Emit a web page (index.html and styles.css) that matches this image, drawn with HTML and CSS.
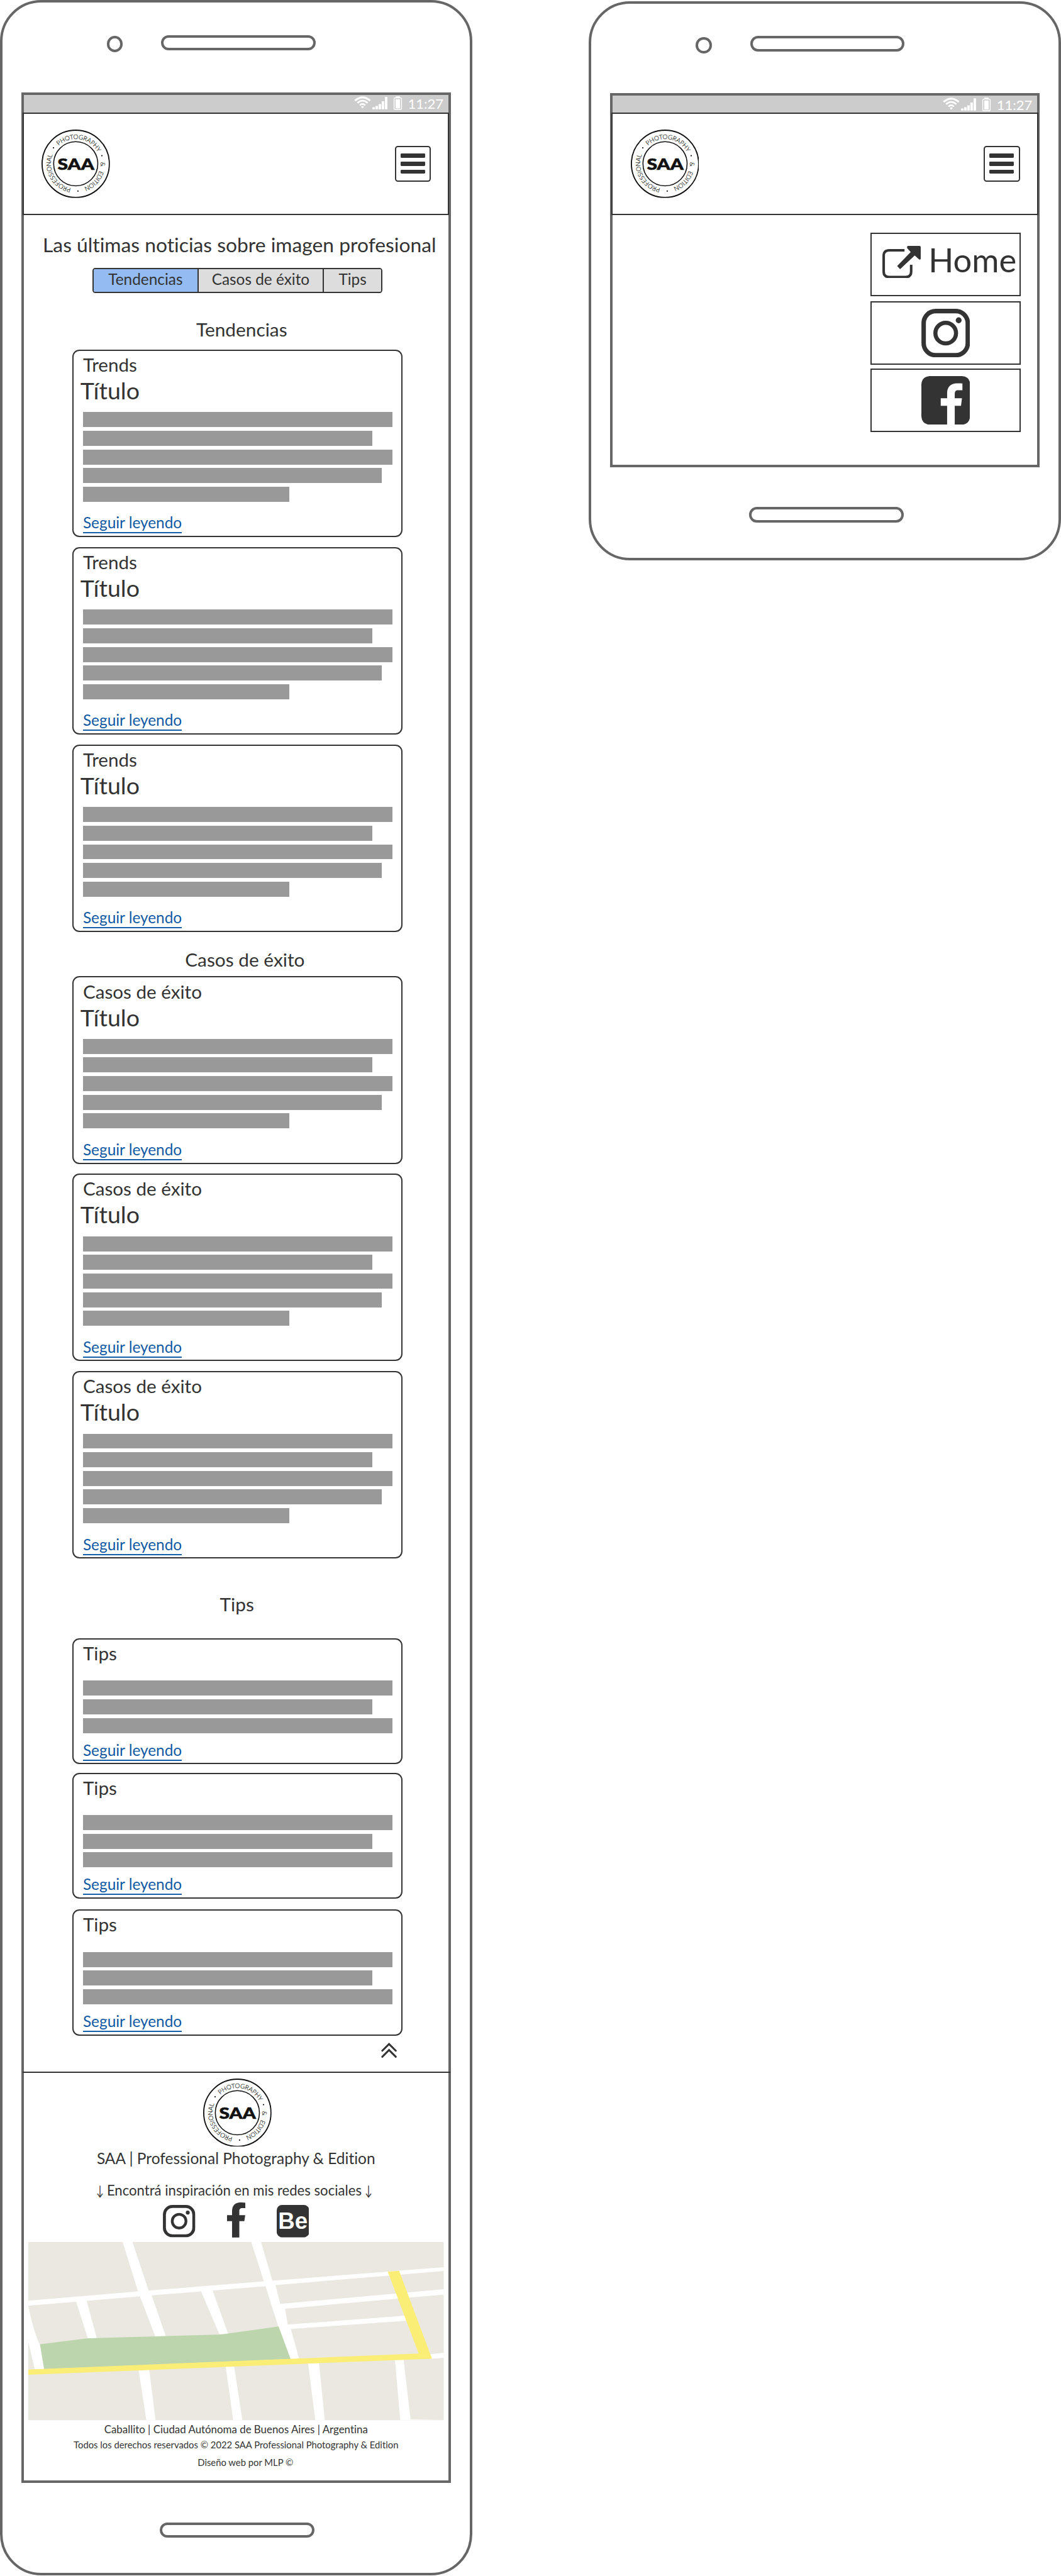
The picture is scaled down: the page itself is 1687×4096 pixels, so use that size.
FILE: index.html
```html
<!DOCTYPE html>
<html lang="es">
<head>
<meta charset="utf-8">
<title>SAA | Noticias</title>
<link rel="stylesheet" href="styles.css">
</head>
<body>
<svg class="defs" width="0" height="0" aria-hidden="true">
  <defs>
    <path id="ring" d="M58 100A42 42 0 0 1 58 16A42 42 0 0 1 58 100"/>
    <symbol id="logo" viewBox="0 0 116 116">
      <circle cx="58" cy="58" r="57" fill="#fff" stroke="#111" stroke-width="2"/>
      <circle cx="58" cy="58" r="37.4" fill="none" stroke="#111" stroke-width="1.7"/>
      <g class="ring-text">
        <text><textPath href="#ring" startOffset="8" textLength="73.3">PROFESSIONAL</textPath></text>
        <text><textPath href="#ring" startOffset="100.1" textLength="77.3">PHOTOGRAPHY</textPath></text>
        <text><textPath href="#ring" startOffset="194.8">&amp;</textPath></text>
        <text><textPath href="#ring" startOffset="209.6" textLength="39.6">EDITION</textPath></text>
      </g>
      <g fill="#111"><circle cx="20.3" cy="31" r="1.2"/><circle cx="102.3" cy="44.3" r="1.2"/><circle cx="61.7" cy="104.3" r="1.2"/></g>
      <text class="logo-name" x="27.2" y="67.9" textLength="62" lengthAdjust="spacingAndGlyphs">SAA</text>
    </symbol>
    <symbol id="instagram" viewBox="0 0 83 83">
      <rect x="3.9" y="3.9" width="75.2" height="75.2" rx="20.5" fill="none" stroke="#333" stroke-width="7.6"/>
      <circle cx="41.5" cy="41.5" r="17.6" fill="none" stroke="#333" stroke-width="7"/>
      <circle cx="63.6" cy="19.6" r="5" fill="#333"/>
    </symbol>
    <symbol id="status-icons" viewBox="0 0 82 24">
      <g fill="none" stroke="#fff" stroke-width="3.4">
        <path d="M1.4 7.6Q14.3 -3.6 27.2 7.6"/>
        <path d="M5.6 11.6Q14.3 3.6 23 11.6" stroke-width="2.8"/>
        <path d="M9.6 15.4Q14.3 11 19 15.4" stroke-width="2.6"/>
      </g>
      <path fill="#fff" d="M11.6 17.8Q14.3 15.6 17 17.8L14.3 20.6ZM31 18.6h4.2v3.4H31zM36.3 16.6h4.2V22h-4.2zM41.5 13.4h4.2V22h-4.2zM46.8 8.4H51V22h-4.2zM52.2 1.2h4.2V22h-4.2z"/>
      <rect x="67.8" y="2.8" width="12.6" height="19.6" rx="1.6" fill="none" stroke="#fff" stroke-width="1.5"/>
      <path fill="#fff" d="M70.5 .2h7.2v2.6h-7.2zM70.3 5h7.6v15.4h-7.6z"/>
    </symbol>
  </defs>
</svg>

<main class="board">
  <section class="phone phone-main">
    <div class="phone-top"><span class="camera"></span><span class="pill speaker"></span></div>
    <div class="screen">
      <div class="status"><svg class="status-icons"><use href="#status-icons"/></svg><span>11:27</span></div>
      <header class="header">
        <svg class="logo"><use href="#logo"/></svg>
        <button class="burger" aria-label="Menú"><i></i><i></i><i></i></button>
      </header>
      <h1 class="page-title">Las últimas noticias sobre imagen profesional</h1>
      <nav class="tabs"><a class="tab active">Tendencias</a><a class="tab">Casos de éxito</a><a class="tab">Tips</a></nav>

      <h2 class="section-title trends-title">Tendencias</h2>
      <div class="cards">
        <article class="card"><h3>Trends</h3><h4>Título</h4><div class="lines"><i></i><i class="w2"></i><i></i><i class="w4"></i><i class="w5"></i></div><a class="more">Seguir leyendo</a></article>
        <article class="card"><h3>Trends</h3><h4>Título</h4><div class="lines"><i></i><i class="w2"></i><i></i><i class="w4"></i><i class="w5"></i></div><a class="more">Seguir leyendo</a></article>
        <article class="card"><h3>Trends</h3><h4>Título</h4><div class="lines"><i></i><i class="w2"></i><i></i><i class="w4"></i><i class="w5"></i></div><a class="more">Seguir leyendo</a></article>
      </div>

      <h2 class="section-title cases-title">Casos de éxito</h2>
      <div class="cards">
        <article class="card"><h3>Casos de éxito</h3><h4>Título</h4><div class="lines"><i></i><i class="w2"></i><i></i><i class="w4"></i><i class="w5"></i></div><a class="more">Seguir leyendo</a></article>
        <article class="card"><h3>Casos de éxito</h3><h4>Título</h4><div class="lines"><i></i><i class="w2"></i><i></i><i class="w4"></i><i class="w5"></i></div><a class="more">Seguir leyendo</a></article>
        <article class="card"><h3>Casos de éxito</h3><h4>Título</h4><div class="lines"><i></i><i class="w2"></i><i></i><i class="w4"></i><i class="w5"></i></div><a class="more">Seguir leyendo</a></article>
      </div>

      <h2 class="section-title tips-title">Tips</h2>
      <div class="cards tips">
        <article class="card tip"><h3>Tips</h3><div class="lines"><i></i><i class="w2"></i><i></i></div><a class="more">Seguir leyendo</a></article>
        <article class="card tip"><h3>Tips</h3><div class="lines"><i></i><i class="w2"></i><i></i></div><a class="more">Seguir leyendo</a></article>
        <article class="card tip"><h3>Tips</h3><div class="lines"><i></i><i class="w2"></i><i></i></div><a class="more">Seguir leyendo</a></article>
      </div>

      <div class="to-top">
        <svg viewBox="0 0 27 26" fill="none" stroke="#333" stroke-width="3.2" stroke-linecap="round" stroke-linejoin="miter"><path d="M2 13.6L13.4 2.3L24.8 13.6M2 23.8L13.4 12.5L24.8 23.8"/></svg>
      </div>

      <footer class="footer">
        <svg class="logo"><use href="#logo"/></svg>
        <p class="brand">SAA | Professional Photography &amp; Edition</p>
        <p class="follow"><span class="arrow">↓</span><span>Encontrá inspiración en mis redes sociales</span><span class="arrow">↓</span></p>
        <div class="social">
          <svg class="ig"><use href="#instagram"/></svg>
          <svg class="fb" viewBox="0 0 31.2 59.4"><path fill="#333" d="M8.5 59.4V31.7H0V21.7H8.5V15C8.5 5 14 0 22.5 0C26 0 29 .2 31.2 .6V9.7H26C22 9.7 20.8 11.4 20.8 15V21.7H30.8L29.3 31.7H20.8V59.4Z"/></svg>
          <svg class="be" viewBox="0 0 55 55"><rect width="55" height="55" rx="9" fill="#333"/><text x="2.4" y="41" textLength="50" lengthAdjust="spacingAndGlyphs">Be</text></svg>
        </div>
        <svg class="map" viewBox="38 60 1492 906" preserveAspectRatio="none">
          <path fill="#ebe8e1" d="M38 60H1530V966H38Z"/>
          <g fill="#fff">
            <path d="M38 358L432 311L884 260L1530 188V207L925 279L890 285L481 331L38 384Z"/>
            <path d="M377 60H412L470 306L481 331L532 540H494L438 333L432 311Z"/>
            <path d="M839 60H874L915 258L926 279L943 375L960 399L970 480L981 502L1011 655H980L936 490L890 285L884 260Z"/>
            <path d="M208 355L246 350L284 550H252Z"/>
            <path d="M657 306L699 302L756 528H724Z"/>
            <path d="M940 375L1530 300V327L960 399H944Z"/>
            <path d="M968 480L1400 433V460L981 502Z"/>
            <path d="M38 384Q57 520 80 582L95 706H61L38 567Z"/>
            <path d="M434 708L472 706L495 966H462Z"/>
            <path d="M747 692L777 690L807 966H774Z"/>
            <path d="M1043 676L1082 674L1103 966H1069Z"/>
            <path d="M1355 660L1386 658L1411 962L1530 965V966H1374Z"/>
            <path d="M1480 631L1530 623V648L1484 654Z"/>
          </g>
          <path fill="#bcd5ac" d="M80 580L252 549L730 530L937 489L980 655L95 706Z"/>
          <path fill="#faee77" d="M38 708L1440 627L1329 210L1370 206L1488 653L38 735Z"/>
        </svg>
        <p class="place">Caballito | Ciudad Autónoma de Buenos Aires | Argentina</p>
        <p class="legal">Todos los derechos reservados © 2022 SAA Professional Photography &amp; Edition</p>
        <p class="legal credit">Diseño web por MLP ©</p>
      </footer>
    </div>
    <span class="pill home-key"></span>
  </section>

  <section class="phone phone-menu">
    <div class="phone-top"><span class="camera"></span><span class="pill speaker"></span></div>
    <div class="screen">
      <div class="status"><svg class="status-icons"><use href="#status-icons"/></svg><span>11:27</span></div>
      <header class="header">
        <svg class="logo"><use href="#logo"/></svg>
        <button class="burger" aria-label="Menú"><i></i><i></i><i></i></button>
      </header>
      <nav class="menu">
        <a class="menu-item home">
          <svg viewBox="0 0 65 55"><path fill="none" stroke="#333" stroke-width="4.3" d="M37.5 7.4H11.5Q2.2 7.4 2.2 16.5V43.5Q2.2 52.8 11.5 52.8H39.5Q48.8 52.8 48.8 43.5V32"/><path fill="#333" d="M43.5 0H63Q65 0 65 2V21.5Q64.6 24.4 62 22.6L54.8 16.2L30 39.5L25 34L48 10.4L42.2 4Q41 .8 43.5 0Z"/></svg>
          <span>Home</span>
        </a>
        <a class="menu-item"><svg class="big"><use href="#instagram"/></svg></a>
        <a class="menu-item"><svg class="big" viewBox="0 0 83 83"><path fill="#333" d="M14 0H69Q83 1 83 14V69Q82 82 69 83H56.9V50.6H67.6L69.2 37.7H56.9V31C56.9 26 58.5 24.2 62.5 24.2H70V12.7C67 12.4 64 12.4 61 12.4C50.5 12.4 43.9 18.5 43.9 29V37.7H33V50.6H43.9V83H14Q1 82 0 69V14Q1 1 14 0Z"/></svg></a>
      </nav>
    </div>
    <span class="pill home-key"></span>
  </section>
</main>
</body>
</html>
```
FILE: styles.css
```css
html { font-size: 9.382px; }
* { box-sizing: border-box; }
body {
  margin: 0;
  background: #fff;
  color: #333;
  font-family: Lato, "Liberation Sans", sans-serif;
  font-variant-ligatures: none;
}
h1, h2, h3, h4, p { margin: 0; font-weight: 400; white-space: nowrap; }
svg { display: block; flex: none; }
.defs { position: absolute; }

.board { display: flex; align-items: flex-start; gap: 19.8rem; width: 179.8rem; height: 436.5rem; overflow: hidden; }

.phone {
  display: flex;
  flex-direction: column;
  flex: none;
  width: 80rem;
  padding: 0 3.2rem;
  border: 4px solid #666;
  border-radius: 7rem;
}
.phone-main { height: 436.5rem; }
.phone-menu { height: 94.8rem; margin-top: .2rem; }
.phone-top { display: flex; align-items: flex-start; height: 15.2rem; padding: 5.5rem 0 0 14.5rem; flex: none; }
.camera { width: 2.7rem; height: 2.7rem; margin-top: .2rem; border: 4px solid #666; border-radius: 50%; }
.pill { width: 26.2rem; height: 2.6rem; border: 4px solid #666; border-radius: 1.3rem; flex: none; }
.speaker { margin-left: 6.5rem; }
.home-key { margin: 6.7rem 0 0 23.5rem; }

.screen { border: 4px solid #666; flex: none; }
.phone-main .screen { height: 405.2rem; }
.phone-menu .screen { height: 63.4rem; }

.status { display: flex; height: 3rem; padding: .2rem .8rem 0 0; justify-content: flex-end; background: #ccc; color: #fff; }
.phone-menu .status { height: 2.8rem; }
.status span { margin-left: .9rem; font-size: 2.35rem; line-height: 2.7rem; }
.status-icons { width: 8.2rem; height: 2.4rem; margin-top: .1rem; }

.header {
  display: flex;
  align-items: center;
  justify-content: space-between;
  height: 17.4rem;
  margin: 0 -.2rem;
  padding: 0 2.9rem 0 3rem;
  border: 2px solid #333;
}
.logo { width: 11.6rem; height: 11.6rem; }
.ring-text { font-size: 10.6px; font-weight: 300; fill: #000; stroke: #000; stroke-width: .15px; }
.logo-name { font-size: 27px; font-weight: 900; fill: #111; stroke: #111; stroke-width: .7px; }
.burger {
  display: flex;
  flex-direction: column;
  align-items: center;
  justify-content: center;
  gap: .68rem;
  width: 6.15rem;
  height: 6.15rem;
  padding: 0;
  border: 2px solid #333;
  border-radius: .5rem;
  background: #fff;
}
.burger i { width: 4.15rem; height: .68rem; border-radius: .15rem; background: #333; }

.page-title { height: 9rem; padding: 3.1rem 0 0 3.2rem; font-size: 3.39rem; line-height: 3.84rem; }
.tabs { display: flex; width: 49.2rem; height: 4.2rem; margin-left: 11.6rem; border: 2px solid #333; border-radius: .5rem; overflow: hidden; }
.tab { width: 21.2rem; background: #ddd; font-size: 2.6rem; line-height: 3.4rem; text-align: center; white-space: nowrap; }
.tab + .tab { border-left: 2px solid #333; }
.tab:first-child { width: 17.6rem; }
.tab:last-child { flex: 1; }
.tab.active { background: #94bbf2; }

.section-title { font-size: 3.18rem; line-height: 3.84rem; }
.trends-title { height: 9.6rem; padding: 4.24rem 0 0 29.2rem; }
.cases-title { height: 7.48rem; padding: 2.77rem 0 0 27.3rem; }
.tips-title { height: 13.46rem; padding: 5.8rem 0 0 33.2rem; }

.cards { display: flex; flex-direction: column; gap: 1.66rem; width: 56rem; margin-left: 8.2rem; }
.cards.tips { gap: 1.4rem; }
.card { display: flex; flex-direction: column; align-items: flex-start; height: 31.8rem; padding: .46rem 1.6rem 0; border: 2px solid #333; border-radius: 1.2rem; flex: none; }
.card h3 { font-size: 3.16rem; line-height: 3.84rem; }
.card h4 { margin: 0 0 0 -.45rem; font-size: 4rem; line-height: 4.8rem; }
.lines { display: flex; flex-direction: column; gap: .61rem; width: 52.4rem; margin-top: 1.3rem; }
.lines i { height: 2.55rem; background: #999; }
.lines .w2 { width: 49rem; }
.lines .w4 { width: 50.6rem; }
.lines .w5 { width: 35rem; }
.more { margin-top: 1.98rem; border-bottom: 2px solid #1560a8; color: #1059a3; font-size: 2.6rem; line-height: 3.2rem; white-space: nowrap; }
.tip { height: 21.4rem; }
.tip:last-child { margin-top: .4rem; }
.tip .lines { margin-top: 2.7rem; }
.tip .more { margin-top: 1.28rem; }

.to-top { display: flex; justify-content: flex-end; height: 6.1rem; padding: 1.15rem 8.7rem 0 0; }
.to-top svg { width: 2.7rem; height: 2.6rem; }

.footer { display: flex; flex-direction: column; align-items: center; margin: 0 -.4rem 0 -.2rem; padding: 0 .4rem 0 .2rem; border-top: 2px solid #333; }
.footer .logo { margin: .9rem 0 0 .4rem; }
.brand { margin-top: .43rem; font-size: 2.61rem; line-height: 3.12rem; }
.follow { display: flex; justify-content: center; gap: .75rem; margin: 2.48rem .6rem 0 0; font-size: 2.36rem; line-height: 2.74rem; }
.arrow { display: flex; justify-content: center; width: .85rem; transform: scaleX(.7); }
.social { display: flex; align-items: flex-end; height: 5.94rem; margin-top: .66rem; }
.ig { width: 5.5rem; height: 5.5rem; }
.fb { width: 3.12rem; height: 5.94rem; margin: 0 5.25rem 0 5.35rem; }
.be { width: 5.5rem; height: 5.5rem; }
.be text { fill: #fff; font: 700 40px "Liberation Sans", sans-serif; }
.map { width: 70.4rem; height: 30.2rem; margin-top: .83rem; }
.place { margin-top: .45rem; font-size: 1.8rem; line-height: 2.16rem; }
.legal { margin-top: .59rem; font-size: 1.58rem; line-height: 1.86rem; }
.credit { margin: 1.14rem 0 0 3.2rem; }

.menu { display: flex; flex-direction: column; align-items: flex-end; padding: 3rem 2.8rem 0 0; }
.menu-item { display: flex; align-items: center; justify-content: center; width: 25.4rem; height: 10.8rem; margin-bottom: .8rem; border: 2px solid #333; }
.menu-item + .menu-item { margin-bottom: .6rem; }
.menu-item.home { align-items: flex-start; justify-content: flex-start; padding: 2rem 0 0 1.75rem; }
.home svg { width: 6.5rem; height: 5.5rem; }
.home span { margin: -.95rem 0 0 1.35rem; font-size: 5.6rem; line-height: 6.6rem; }
.big { width: 8.25rem; height: 8.25rem; }
```
